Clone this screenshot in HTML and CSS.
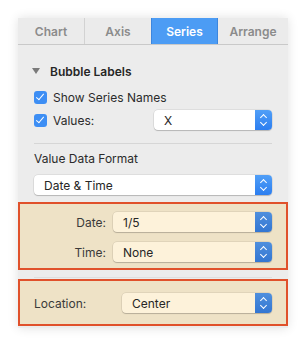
FILE: index.html
```html
<!DOCTYPE html>
<html lang="en">
<head>
    <meta charset="UTF-8">
    <title>Series Inspector</title>
    <link rel="stylesheet" href="styles.css">
</head>
<body>
    <div class="panel">
        <div class="tabs">
            <div class="tab tab-chart">Chart</div>
            <div class="tab tab-axis">Axis</div>
            <div class="tab tab-series active">Series</div>
            <div class="tab tab-arrange">Arrange</div>
        </div>

        <div class="content">
            <div class="section-title">
                <span class="disclosure"></span>
                Bubble Labels
            </div>

            <label class="check-row">
                <span class="checkbox"></span>
                Show Series Names
            </label>

            <div class="check-row values-row">
                <span class="checkbox"></span>
                <span class="values-label">Values:</span>
                <div class="popup">
                    <span class="popup-text">X</span>
                    <span class="stepper"></span>
                </div>
            </div>

            <div class="divider"></div>

            <div class="field-title">Value Data Format</div>
            <div class="popup full">
                <span class="popup-text">Date &amp; Time</span>
                <span class="stepper"></span>
            </div>

            <div class="highlight date-box">
                <div class="form-row">
                    <span class="form-label">Date:</span>
                    <div class="popup">
                        <span class="popup-text">1/5</span>
                        <span class="stepper"></span>
                    </div>
                </div>
                <div class="form-row">
                    <span class="form-label">Time:</span>
                    <div class="popup">
                        <span class="popup-text">None</span>
                        <span class="stepper"></span>
                    </div>
                </div>
            </div>

            <div class="divider divider-low"></div>

            <div class="highlight location-box">
                <div class="form-row">
                    <span class="location-label">Location:</span>
                    <div class="popup">
                        <span class="popup-text">Center</span>
                        <span class="stepper"></span>
                    </div>
                </div>
            </div>
        </div>
    </div>
</body>
</html>
```

FILE: styles.css
```css
* {
    margin: 0;
    padding: 0;
    box-sizing: border-box;
}

body {
    background-color: #ffffff;
    padding: 18px;
    font-family: Inter, 'Liberation Sans', sans-serif;
    font-size: 12px;
    color: #2b2b2b;
}

.panel {
    width: 270px;
    background-color: #ececec;
    box-shadow: 0 0 10px rgba(0, 0, 0, 0.12);
}

.tabs {
    display: flex;
    height: 27px;
    background-color: #ebebeb;
    border-bottom: 1px solid #c9c9c9;
}

.tab {
    display: flex;
    align-items: center;
    justify-content: center;
    padding-top: 1px;
    color: #8b8b8b;
    font-weight: 600;
    font-size: 12px;
}

.tab-chart {
    width: 67px;
    border-right: 1px solid #d2d2d2;
}

.tab-axis {
    width: 66px;
}

.tab-series {
    width: 67px;
}

.tab-arrange {
    flex: 1;
}

.tab.active {
    background-color: #4c9cf4;
    color: #ffffff;
    border-left: 1px solid #3c86de;
    border-right: 1px solid #3c86de;
}

.content {
    padding: 0 16px 2px;
}

.section-title {
    display: flex;
    align-items: center;
    height: 20px;
    margin-top: 16px;
    font-weight: 600;
    color: #262626;
}

.disclosure {
    width: 0;
    height: 0;
    margin: 0 10px 0 -2px;
    border-left: 4px solid transparent;
    border-right: 4px solid transparent;
    border-top: 6px solid #7a7a7a;
}

.check-row {
    display: flex;
    align-items: center;
    height: 20px;
    margin-top: 6px;
    color: #2b2b2b;
}

.values-row {
    margin-top: 3px;
}

.checkbox {
    position: relative;
    width: 13px;
    height: 13px;
    margin-right: 6px;
    border-radius: 3px;
    background-color: #3d8ef4;
}

.checkbox::after {
    content: '';
    position: absolute;
    left: 4px;
    top: 1px;
    width: 3px;
    height: 7px;
    border-right: 1.6px solid #ffffff;
    border-bottom: 1.6px solid #ffffff;
    transform: rotate(40deg);
}

.values-label {
    width: 101px;
}

.popup {
    flex: 1;
    display: flex;
    align-items: center;
    height: 20px;
    background-color: #ffffff;
    border-radius: 4px;
    box-shadow: 0 0 0 0.5px rgba(0, 0, 0, 0.12), 0 1px 1px rgba(0, 0, 0, 0.18);
}

.popup.full {
    margin-top: 8px;
}

.popup-text {
    flex: 1;
    padding-left: 10px;
    color: #262626;
}

.stepper {
    position: relative;
    width: 17px;
    height: 20px;
    border-radius: 0 4px 4px 0;
    background: linear-gradient(#519ff7, #2c7ef0);
}

.stepper::before,
.stepper::after {
    content: '';
    position: absolute;
    left: 6px;
    width: 4px;
    height: 4px;
    border-left: 1.4px solid #ffffff;
    border-top: 1.4px solid #ffffff;
}

.stepper::before {
    top: 5px;
    transform: rotate(45deg);
}

.stepper::after {
    top: 10px;
    transform: rotate(-135deg);
}

.divider {
    height: 1px;
    margin-top: 13px;
    background-color: #d6d6d6;
}

.field-title {
    height: 16px;
    margin-top: 7px;
    line-height: 16px;
    color: #2b2b2b;
}

.highlight {
    margin: 7px -16px 0;
    padding: 0 14px;
    background-color: #eee2c6;
    border: 2px solid #e0512b;
}

.highlight .popup {
    background-color: #fdf2da;
}

.highlight .stepper {
    background: linear-gradient(#4f8fdd, #3376d2);
}

.date-box {
    padding-top: 8px;
    padding-bottom: 6px;
}

.date-box .form-row + .form-row {
    margin-top: 10px;
}

.form-row {
    display: flex;
    align-items: center;
}

.form-label {
    width: 72px;
    margin-right: 7px;
    text-align: right;
    color: #3a3a3a;
}

.divider-low {
    margin-top: 7px;
    background-color: #dedede;
}

.location-box {
    margin-top: 1px;
    padding-top: 12px;
    padding-bottom: 11px;
}

.location-label {
    width: 88px;
    color: #3a3a3a;
}
```
